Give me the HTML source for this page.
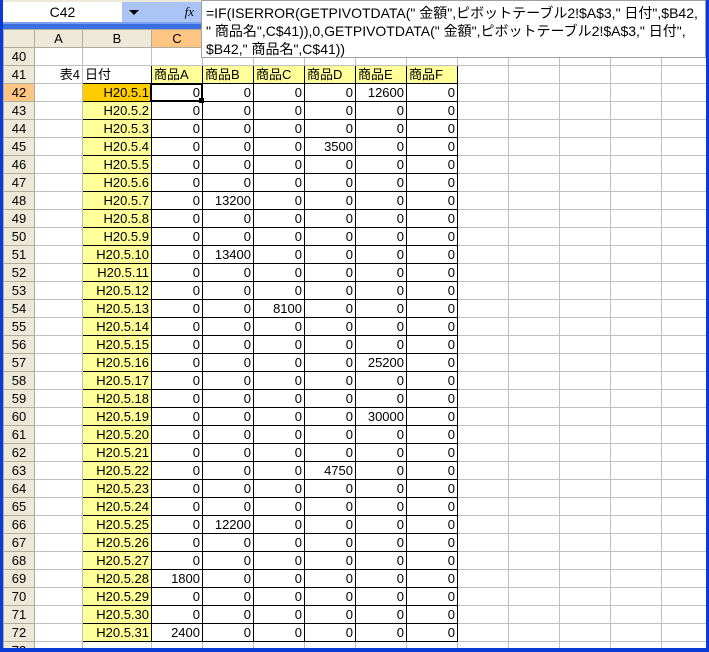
<!DOCTYPE html>
<html><head><meta charset="utf-8"><style>
*{margin:0;padding:0;box-sizing:border-box}
body{width:709px;height:652px;overflow:hidden;background:#0a3ad8;position:relative;font-family:"Liberation Sans","Noto Sans CJK JP",sans-serif;font-size:13px}
#top{position:absolute;left:3px;top:0;width:703px;height:29px;background:#ece9d8}
#nb{position:absolute;left:3px;top:2px;width:119px;height:20px;background:#fff;text-align:center;line-height:20px;font-size:14px}
#dd{position:absolute;left:122px;top:2px;width:24px;height:20px;background:#a9c4f5}
#dd:after{content:"";position:absolute;left:7px;top:8px;border:5px solid transparent;border-top:5px solid #000;border-bottom:0}
#fxb{position:absolute;left:146px;top:2px;width:56px;height:20px;background:#a9c4f5;font-style:italic;font-family:"Liberation Serif",serif;font-size:13px;text-align:right;padding-right:8px;line-height:20px}
#stripe{position:absolute;left:3px;top:22px;width:200px;height:7px;background:#3a6ee0;border-top:2px solid #7aa0f0}
#sheet{position:absolute;left:3px;top:29px;width:703px;height:619px;background:#fff;overflow:hidden}
table{border-collapse:collapse;table-layout:fixed;width:749px}
td{height:18px;border:1px solid #c0c0c0;padding:0 2px;text-align:right;white-space:nowrap;overflow:hidden;line-height:16px;font-size:13px}
td.h{background:#ece9d8;text-align:center;border-color:#b0ad9e;color:#000}
td.hs{background:#ffc683}
tr.ch td{background:#ece9d8;text-align:center;border-color:#b0ad9e}
tr.ch td.hs{background:#ffc683}
td.b{background:#ffff99;border:1px solid #000}
td.bs{background:#ffcc00;border:1px solid #000}
td.d{border:1px solid #000}
td.y{background:#ffff99;border:1px solid #000;text-align:left}
#fbox{position:absolute;left:201px;top:0;width:505px;height:58px;background:#fff;border:1px solid #a0a0a0;font-size:14px;line-height:18px;padding:3px 0 0 4px;white-space:nowrap}
#sel{position:absolute;left:150px;top:83px;width:53px;height:19px;border:2px solid #000}
#selh{position:absolute;left:199px;top:98px;width:5px;height:5px;background:#000}
</style></head><body>
<div id="top"></div>
<div id="nb">C42</div><div id="dd"></div><div id="fxb">fx</div><div id="stripe"></div>
<div id="sheet">
<table>
<colgroup><col style="width:31px"><col style="width:48px"><col style="width:69px"><col style="width:51px"><col style="width:51px"><col style="width:51px"><col style="width:51px"><col style="width:51px"><col style="width:51px"><col style="width:51px"><col style="width:51px"><col style="width:51px"><col style="width:51px"><col style="width:51px"><col style="width:40px"></colgroup>
<tr class="ch"><td></td><td>A</td><td>B</td><td class="hs">C</td><td>D</td><td>E</td><td>F</td><td>G</td><td>H</td><td>I</td><td>J</td><td>K</td><td>L</td><td>M</td><td></td></tr>
<tr><td class="h">40</td><td></td><td></td><td></td><td></td><td></td><td></td><td></td><td></td><td></td><td></td><td></td><td></td><td></td><td></td></tr>
<tr><td class="h">41</td><td>表4</td><td class="d" style="text-align:left">日付</td><td class="y">商品A</td><td class="y">商品B</td><td class="y">商品C</td><td class="y">商品D</td><td class="y">商品E</td><td class="y">商品F</td><td></td><td></td><td></td><td></td><td></td><td></td></tr>
<tr><td class="h hs">42</td><td></td><td class="bs">H20.5.1</td><td class="d">0</td><td class="d">0</td><td class="d">0</td><td class="d">0</td><td class="d">12600</td><td class="d">0</td><td></td><td></td><td></td><td></td><td></td><td></td></tr>
<tr><td class="h">43</td><td></td><td class="b">H20.5.2</td><td class="d">0</td><td class="d">0</td><td class="d">0</td><td class="d">0</td><td class="d">0</td><td class="d">0</td><td></td><td></td><td></td><td></td><td></td><td></td></tr>
<tr><td class="h">44</td><td></td><td class="b">H20.5.3</td><td class="d">0</td><td class="d">0</td><td class="d">0</td><td class="d">0</td><td class="d">0</td><td class="d">0</td><td></td><td></td><td></td><td></td><td></td><td></td></tr>
<tr><td class="h">45</td><td></td><td class="b">H20.5.4</td><td class="d">0</td><td class="d">0</td><td class="d">0</td><td class="d">3500</td><td class="d">0</td><td class="d">0</td><td></td><td></td><td></td><td></td><td></td><td></td></tr>
<tr><td class="h">46</td><td></td><td class="b">H20.5.5</td><td class="d">0</td><td class="d">0</td><td class="d">0</td><td class="d">0</td><td class="d">0</td><td class="d">0</td><td></td><td></td><td></td><td></td><td></td><td></td></tr>
<tr><td class="h">47</td><td></td><td class="b">H20.5.6</td><td class="d">0</td><td class="d">0</td><td class="d">0</td><td class="d">0</td><td class="d">0</td><td class="d">0</td><td></td><td></td><td></td><td></td><td></td><td></td></tr>
<tr><td class="h">48</td><td></td><td class="b">H20.5.7</td><td class="d">0</td><td class="d">13200</td><td class="d">0</td><td class="d">0</td><td class="d">0</td><td class="d">0</td><td></td><td></td><td></td><td></td><td></td><td></td></tr>
<tr><td class="h">49</td><td></td><td class="b">H20.5.8</td><td class="d">0</td><td class="d">0</td><td class="d">0</td><td class="d">0</td><td class="d">0</td><td class="d">0</td><td></td><td></td><td></td><td></td><td></td><td></td></tr>
<tr><td class="h">50</td><td></td><td class="b">H20.5.9</td><td class="d">0</td><td class="d">0</td><td class="d">0</td><td class="d">0</td><td class="d">0</td><td class="d">0</td><td></td><td></td><td></td><td></td><td></td><td></td></tr>
<tr><td class="h">51</td><td></td><td class="b">H20.5.10</td><td class="d">0</td><td class="d">13400</td><td class="d">0</td><td class="d">0</td><td class="d">0</td><td class="d">0</td><td></td><td></td><td></td><td></td><td></td><td></td></tr>
<tr><td class="h">52</td><td></td><td class="b">H20.5.11</td><td class="d">0</td><td class="d">0</td><td class="d">0</td><td class="d">0</td><td class="d">0</td><td class="d">0</td><td></td><td></td><td></td><td></td><td></td><td></td></tr>
<tr><td class="h">53</td><td></td><td class="b">H20.5.12</td><td class="d">0</td><td class="d">0</td><td class="d">0</td><td class="d">0</td><td class="d">0</td><td class="d">0</td><td></td><td></td><td></td><td></td><td></td><td></td></tr>
<tr><td class="h">54</td><td></td><td class="b">H20.5.13</td><td class="d">0</td><td class="d">0</td><td class="d">8100</td><td class="d">0</td><td class="d">0</td><td class="d">0</td><td></td><td></td><td></td><td></td><td></td><td></td></tr>
<tr><td class="h">55</td><td></td><td class="b">H20.5.14</td><td class="d">0</td><td class="d">0</td><td class="d">0</td><td class="d">0</td><td class="d">0</td><td class="d">0</td><td></td><td></td><td></td><td></td><td></td><td></td></tr>
<tr><td class="h">56</td><td></td><td class="b">H20.5.15</td><td class="d">0</td><td class="d">0</td><td class="d">0</td><td class="d">0</td><td class="d">0</td><td class="d">0</td><td></td><td></td><td></td><td></td><td></td><td></td></tr>
<tr><td class="h">57</td><td></td><td class="b">H20.5.16</td><td class="d">0</td><td class="d">0</td><td class="d">0</td><td class="d">0</td><td class="d">25200</td><td class="d">0</td><td></td><td></td><td></td><td></td><td></td><td></td></tr>
<tr><td class="h">58</td><td></td><td class="b">H20.5.17</td><td class="d">0</td><td class="d">0</td><td class="d">0</td><td class="d">0</td><td class="d">0</td><td class="d">0</td><td></td><td></td><td></td><td></td><td></td><td></td></tr>
<tr><td class="h">59</td><td></td><td class="b">H20.5.18</td><td class="d">0</td><td class="d">0</td><td class="d">0</td><td class="d">0</td><td class="d">0</td><td class="d">0</td><td></td><td></td><td></td><td></td><td></td><td></td></tr>
<tr><td class="h">60</td><td></td><td class="b">H20.5.19</td><td class="d">0</td><td class="d">0</td><td class="d">0</td><td class="d">0</td><td class="d">30000</td><td class="d">0</td><td></td><td></td><td></td><td></td><td></td><td></td></tr>
<tr><td class="h">61</td><td></td><td class="b">H20.5.20</td><td class="d">0</td><td class="d">0</td><td class="d">0</td><td class="d">0</td><td class="d">0</td><td class="d">0</td><td></td><td></td><td></td><td></td><td></td><td></td></tr>
<tr><td class="h">62</td><td></td><td class="b">H20.5.21</td><td class="d">0</td><td class="d">0</td><td class="d">0</td><td class="d">0</td><td class="d">0</td><td class="d">0</td><td></td><td></td><td></td><td></td><td></td><td></td></tr>
<tr><td class="h">63</td><td></td><td class="b">H20.5.22</td><td class="d">0</td><td class="d">0</td><td class="d">0</td><td class="d">4750</td><td class="d">0</td><td class="d">0</td><td></td><td></td><td></td><td></td><td></td><td></td></tr>
<tr><td class="h">64</td><td></td><td class="b">H20.5.23</td><td class="d">0</td><td class="d">0</td><td class="d">0</td><td class="d">0</td><td class="d">0</td><td class="d">0</td><td></td><td></td><td></td><td></td><td></td><td></td></tr>
<tr><td class="h">65</td><td></td><td class="b">H20.5.24</td><td class="d">0</td><td class="d">0</td><td class="d">0</td><td class="d">0</td><td class="d">0</td><td class="d">0</td><td></td><td></td><td></td><td></td><td></td><td></td></tr>
<tr><td class="h">66</td><td></td><td class="b">H20.5.25</td><td class="d">0</td><td class="d">12200</td><td class="d">0</td><td class="d">0</td><td class="d">0</td><td class="d">0</td><td></td><td></td><td></td><td></td><td></td><td></td></tr>
<tr><td class="h">67</td><td></td><td class="b">H20.5.26</td><td class="d">0</td><td class="d">0</td><td class="d">0</td><td class="d">0</td><td class="d">0</td><td class="d">0</td><td></td><td></td><td></td><td></td><td></td><td></td></tr>
<tr><td class="h">68</td><td></td><td class="b">H20.5.27</td><td class="d">0</td><td class="d">0</td><td class="d">0</td><td class="d">0</td><td class="d">0</td><td class="d">0</td><td></td><td></td><td></td><td></td><td></td><td></td></tr>
<tr><td class="h">69</td><td></td><td class="b">H20.5.28</td><td class="d">1800</td><td class="d">0</td><td class="d">0</td><td class="d">0</td><td class="d">0</td><td class="d">0</td><td></td><td></td><td></td><td></td><td></td><td></td></tr>
<tr><td class="h">70</td><td></td><td class="b">H20.5.29</td><td class="d">0</td><td class="d">0</td><td class="d">0</td><td class="d">0</td><td class="d">0</td><td class="d">0</td><td></td><td></td><td></td><td></td><td></td><td></td></tr>
<tr><td class="h">71</td><td></td><td class="b">H20.5.30</td><td class="d">0</td><td class="d">0</td><td class="d">0</td><td class="d">0</td><td class="d">0</td><td class="d">0</td><td></td><td></td><td></td><td></td><td></td><td></td></tr>
<tr><td class="h">72</td><td></td><td class="b">H20.5.31</td><td class="d">2400</td><td class="d">0</td><td class="d">0</td><td class="d">0</td><td class="d">0</td><td class="d">0</td><td></td><td></td><td></td><td></td><td></td><td></td></tr>
<tr><td class="h">73</td><td></td><td></td><td></td><td></td><td></td><td></td><td></td><td></td><td></td><td></td><td></td><td></td><td></td><td></td></tr>
</table>
</div>
<div id="sel"></div><div id="selh"></div>
<div id="fbox">=IF(ISERROR(GETPIVOTDATA(" 金額",ピボットテーブル2!$A$3," 日付",$B42,<br>" 商品名",C$41)),0,GETPIVOTDATA(" 金額",ピボットテーブル2!$A$3," 日付",<br>$B42," 商品名",C$41))</div>
</body></html>
